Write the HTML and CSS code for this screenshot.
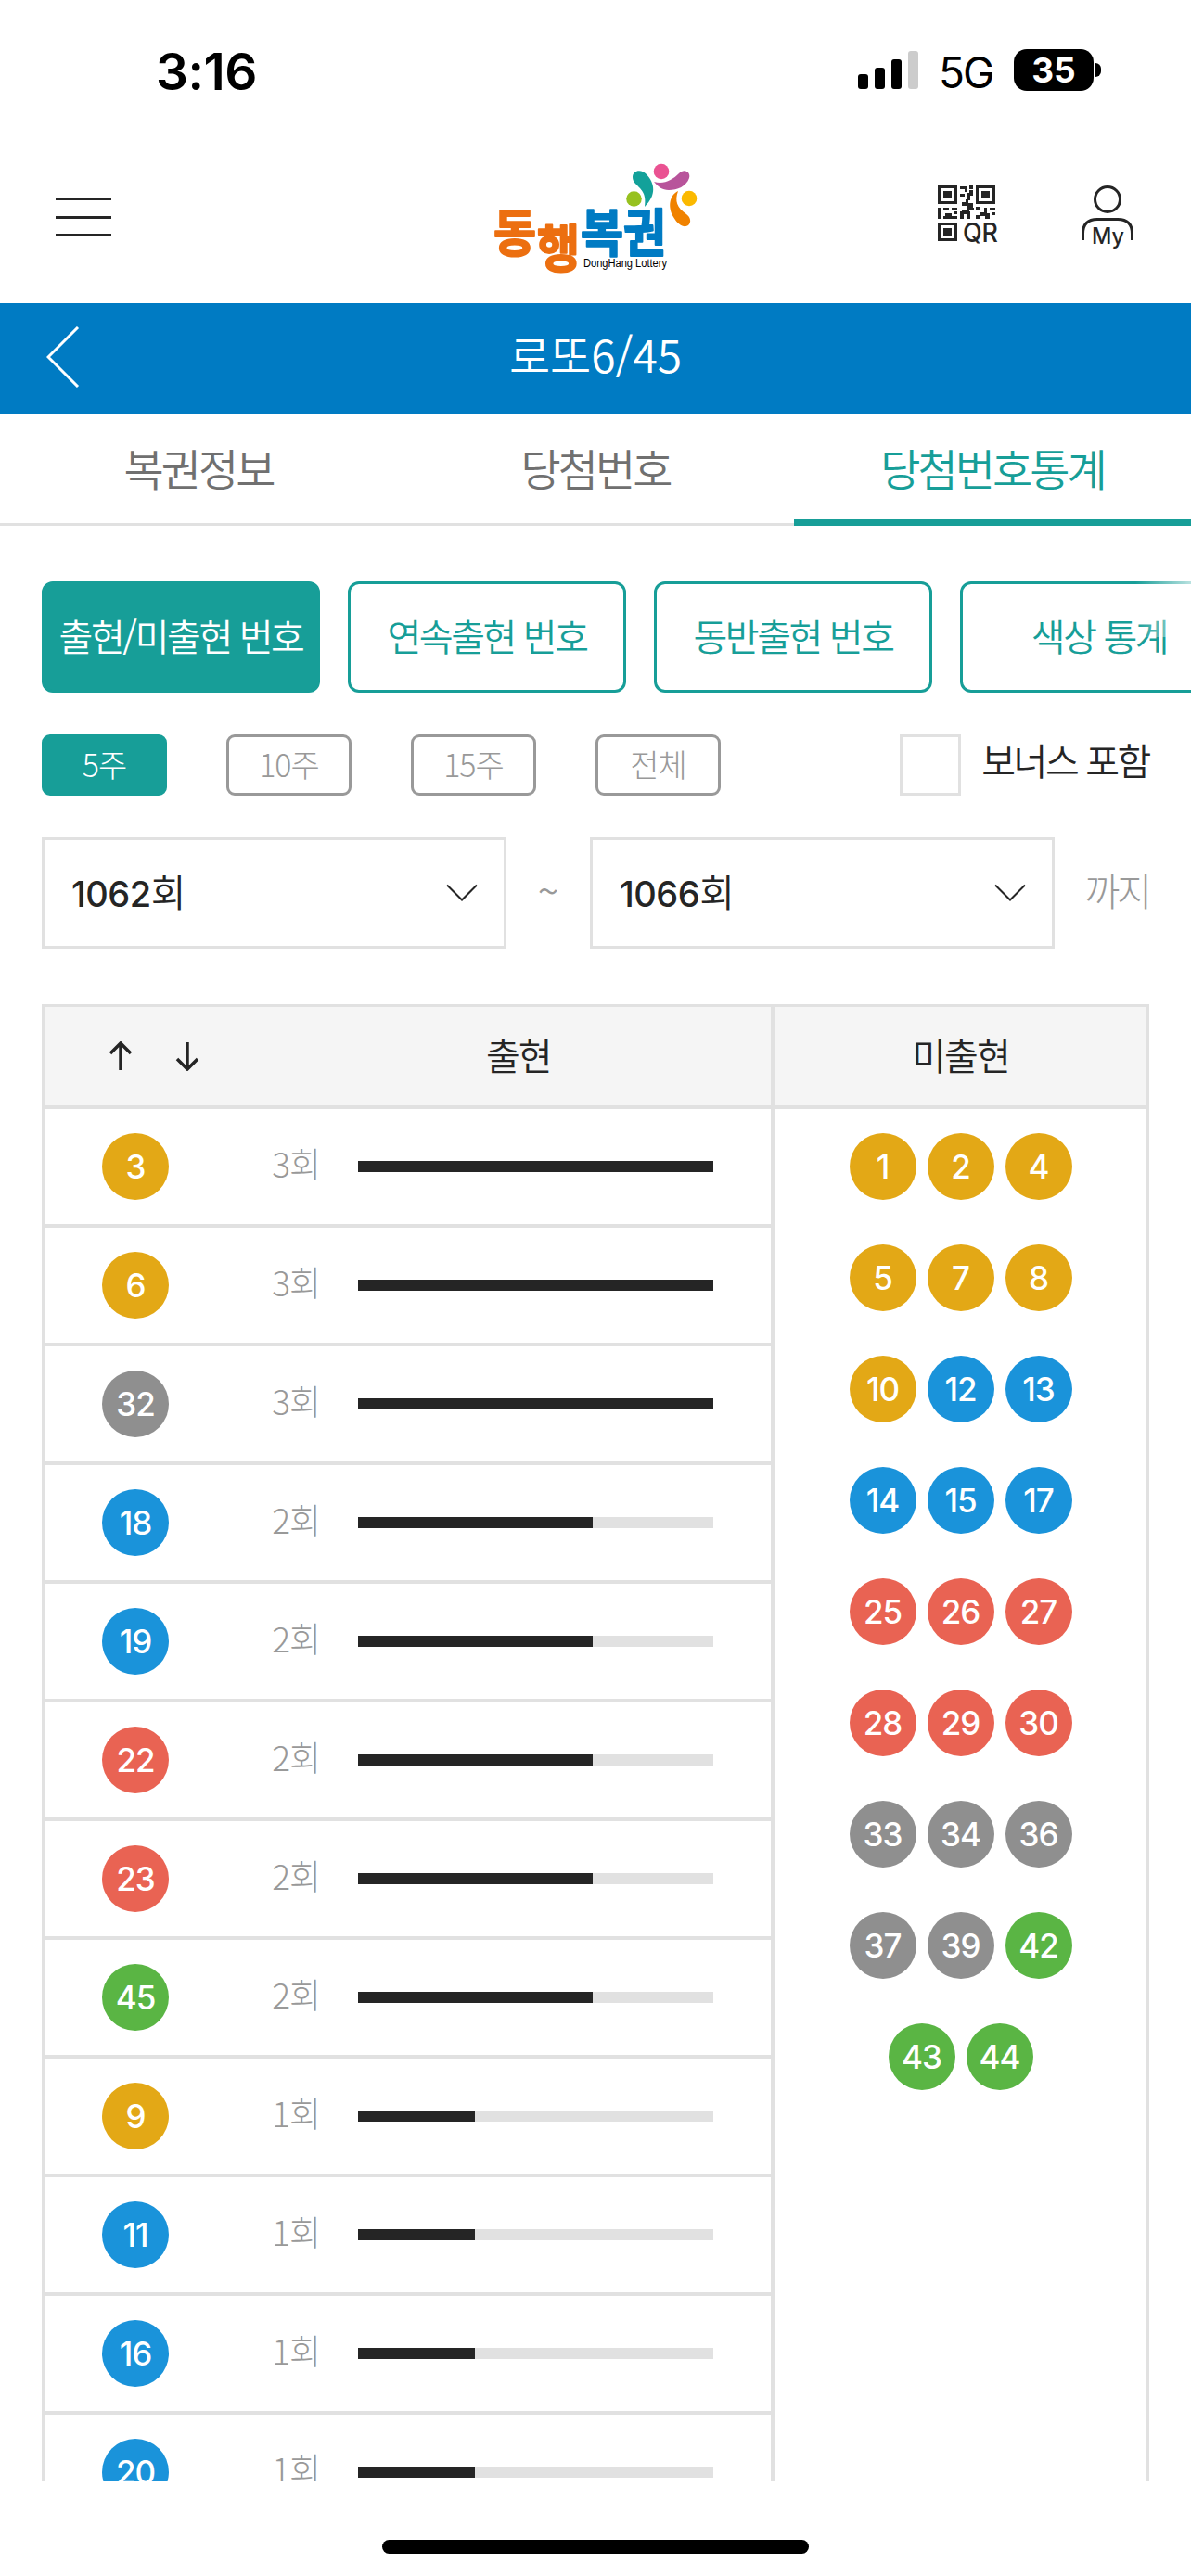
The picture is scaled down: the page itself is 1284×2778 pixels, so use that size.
FILE: index.html
```
<!DOCTYPE html>
<html lang="ko">
<head>
  <meta charset="UTF-8">
  <meta name="viewport" content="width=device-width, initial-scale=1.0">
  <title>동행복권 - 당첨번호통계</title>
  <link rel="stylesheet" href="styles.css">
</head>
<body>
  <div class="status">
    <span class="time">3:16</span>
    <div class="status-right">
      <svg class="signal" width="65" height="42" viewBox="0 0 65 42">
        <rect x="0" y="25" width="11" height="16" rx="3"/>
        <rect x="18" y="18" width="11" height="23" rx="3"/>
        <rect x="36" y="9" width="11" height="32" rx="3"/>
        <rect x="54" y="0" width="11" height="41" rx="3" fill="#ccc"/>
      </svg>
      <span class="network">5G</span>
      <span class="battery">35</span>
    </div>
  </div>

  <header>
    <button class="menu" aria-label="메뉴"><i></i><i></i><i></i></button>
    <svg class="logo" width="222" height="120" viewBox="0 0 222 120">
      <g class="logo-text">
        <text x="0" y="94" textLength="46" lengthAdjust="spacingAndGlyphs" fill="#ec6f10" stroke="#ec6f10">동</text>
        <text x="47" y="111" textLength="46" lengthAdjust="spacingAndGlyphs" fill="#ec6f10" stroke="#ec6f10">행</text>
        <text x="94" y="94" textLength="46" lengthAdjust="spacingAndGlyphs" fill="#007bc3" stroke="#007bc3">복</text>
        <text x="140" y="94" textLength="46" lengthAdjust="spacingAndGlyphs" fill="#007bc3" stroke="#007bc3">권</text>
      </g>
      <text class="logo-sub" x="97" y="111" textLength="90" lengthAdjust="spacingAndGlyphs">DongHang Lottery</text>
      <circle cx="181" cy="8" r="8.300" fill="#ea5292"/>
      <circle cx="151.500" cy="37.500" r="8.300" fill="#97c11f"/>
      <circle cx="211" cy="37" r="8.300" fill="#fbb900"/>
      <path fill="#13a19a" d="M150 14C150 6 160 5 165 11C174 21 176 33 163 46C165 32 160 28 154 22C151 19 150 17 150 14Z"/>
      <path fill="#b8549b" d="M173 19C184 22 193 17 200 10C206 4 213 9 211 15C208 24 198 28 189 28C182 28 177 24 173 19Z"/>
      <path fill="#f08200" d="M199 29C189 34 188 47 194 57C199 66 206 69 210 66C214 62 212 57 208 54C198 47 195 40 199 29Z"/>
    </svg>
    <div class="header-icons">
      <svg width="68" height="70" viewBox="0 0 68 70" fill="#252525">
        <g fill="none" stroke="#252525" stroke-width="3">
          <rect x="1.500" y="1.500" width="18" height="17"/>
          <rect x="42.500" y="1.500" width="18" height="17"/>
          <rect x="1.500" y="41.500" width="18" height="17"/>
        </g>
        <path d="M6 6h9v8H6zM47 6h9v8h-9zM6 46h9v8H6z"/>
        <path d="M24 1h8v6h-3v-3h-5zM34 0h4v4h-4zM24 9h5v3h-5zM31 8h3v-3h4v6h-3v5h-4zM26 18h4v-3h3v4h5v7h-4v3h-8v-3h5v-4h-5zM0 24h3v12H0zM6 24h6v3H6zM15 24h6v3h-6zM8 30h7v3h6v3H6v-3h2zM18 28h3v3h-3zM24 28h11v8h-4v-5h-3v5h-4zM41 23h4v4h-4zM36 24h3v3h-3zM41 32h5v-3h4v-5h3v6h3v6h-5v-3h-5v3h-5zM56 24h6v3h-6zM59 29h3v3h-3z"/>
        <text class="icon-text" x="27" y="61" textLength="38" lengthAdjust="spacingAndGlyphs">QR</text>
      </svg>
      <svg width="56" height="72" viewBox="0 0 56 72" fill="#252525">
        <g fill="none" stroke="#252525" stroke-width="3">
          <circle cx="28" cy="15" r="13.500"/>
          <path d="M1.500 59V52Q1.500 36.500 17 36.500H39Q54.500 36.500 54.500 52V59"/>
        </g>
        <text class="icon-text my" x="11" y="63" textLength="35" lengthAdjust="spacingAndGlyphs">My</text>
      </svg>
    </div>
  </header>

  <div class="title-bar">
    <svg class="back" width="36" height="66" viewBox="0 0 36 66">
      <path d="M34 1L2 33L34 65" fill="none" stroke="#fff" stroke-width="3"/>
    </svg>
    <h1>로또6/45</h1>
  </div>

  <nav class="tabs">
    <a>복권정보</a>
    <a>당첨번호</a>
    <a class="active">당첨번호통계</a>
  </nav>

  <main>
    <div class="types">
      <button class="on">출현/미출현 번호</button>
      <button>연속출현 번호</button>
      <button>동반출현 번호</button>
      <button>색상 통계</button>
    </div>

    <div class="weeks">
      <button class="on">5주</button>
      <button>10주</button>
      <button>15주</button>
      <button>전체</button>
      <label><span class="box"></span>보너스 포함</label>
    </div>

    <div class="range">
      <div class="select"><span><b>1062</b>회</span>
        <svg width="34" height="20" viewBox="0 0 34 20"><path d="M1 1.500L17 17.500L33 1.500" fill="none" stroke="#252525" stroke-width="2"/></svg>
      </div>
      <span class="tilde">~</span>
      <div class="select"><span><b>1066</b>회</span>
        <svg width="34" height="20" viewBox="0 0 34 20"><path d="M1 1.500L17 17.500L33 1.500" fill="none" stroke="#252525" stroke-width="2"/></svg>
      </div>
      <span class="until">까지</span>
    </div>

    <div class="stats">
      <div class="shown">
        <div class="head">
          <svg class="sort" width="98" height="32" viewBox="0 0 98 32">
            <path d="M13 31V3M2 13L13 2L24 13M85 1V29M74 19L85 30L96 19" fill="none" stroke="#252525" stroke-width="3.500"/>
          </svg>
          <span>출현</span>
        </div>
        <div id="shown-list"></div>
      </div>
      <div class="missing">
        <div class="head">미출현</div>
        <div class="balls" id="missing-list"></div>
      </div>
    </div>
  </main>

  <div class="home"></div>

  <script>
    const shown = [[3, 3], [6, 3], [32, 3], [18, 2], [19, 2], [22, 2], [23, 2], [45, 2], [9, 1], [11, 1], [16, 1], [20, 1]];
    const missing = [1, 2, 4, 5, 7, 8, 10, 12, 13, 14, 15, 17, 25, 26, 27, 28, 29, 30, 33, 34, 36, 37, 39, 42, 43, 44];
    const widths = { 1: 33, 2: 66, 3: 100 };

    function ball(n) {
      const colors = ['yellow', 'blue', 'red', 'gray', 'green'];
      return `<span class="ball ${colors[Math.floor((n - 1) / 10)]}">${n}</span>`;
    }

    document.getElementById('shown-list').innerHTML = shown.map(([n, count]) => `
      <div class="row">
        ${ball(n)}
        <span class="count">${count}회</span>
        <div class="bar"><div style="width: ${widths[count]}%"></div></div>
      </div>`).join('');
    document.getElementById('missing-list').innerHTML = missing.map(ball).join('');
  </script>
</body>
</html>
```

FILE: styles.css
```
* {
  box-sizing: border-box;
}
body {
  margin: 0;
  height: 2778px;
  overflow: hidden;
  display: flex;
  flex-direction: column;
  background: #fff;
  color: #252525;
  font-family: 'Noto Sans CJK KR', sans-serif;
  font-weight: 350;
}
button {
  padding: 0;
  background: none;
  border: none;
  font: inherit;
}
.status {
  height: 141px;
  padding: 0 97px 0 168px;
  display: flex;
  justify-content: space-between;
  font-family: Inter, sans-serif;
  color: #000;
}
.time {
  margin-top: 44px;
  font-size: 55px;
  line-height: 66px;
  font-weight: 600;
  letter-spacing: -0.500px;
}
.status-right {
  display: flex;
  align-items: flex-start;
}
.signal {
  margin: 55px 22px 0 0;
}
.network {
  width: 81px;
  margin-top: 50px;
  font-size: 46px;
  line-height: 56px;
  font-weight: 400;
  letter-spacing: -2px;
}
.battery {
  position: relative;
  width: 86px;
  height: 45px;
  margin: 53px 8px 0 0;
  border-radius: 14px;
  background: #000;
  color: #fff;
  font-size: 37px;
  line-height: 45px;
  font-weight: 700;
  text-align: center;
}
.battery::after {
  content: '';
  position: absolute;
  left: 88px;
  top: 15px;
  width: 6px;
  height: 15px;
  border-radius: 0 6px 6px 0;
  background: #000;
}
header {
  height: 186px;
  padding: 0 62px 0 60px;
  display: flex;
  align-items: flex-start;
}
.menu {
  width: 60px;
  margin-top: 72px;
  display: flex;
  flex-direction: column;
  gap: 16.5px;
}
.menu i {
  height: 3px;
  background: #252525;
}
.logo {
  margin: 36px 0 0 412px;
  overflow: visible;
}
.logo-text {
  font-size: 55px;
  font-weight: 700;
  stroke-width: 2;
  stroke-linejoin: round;
}
.logo-sub {
  font: 400 12px 'Liberation Sans', sans-serif;
}
.header-icons {
  display: flex;
  gap: 87px;
  margin: 59px 0 0 auto;
}
.icon-text {
  font: 500 28px Inter, sans-serif;
}
.my {
  font-size: 24px;
}
.title-bar {
  height: 120px;
  flex: none;
  display: flex;
  align-items: center;
  padding: 0 50px;
  background: #007bc3;
  color: #fff;
}
.back {
  margin-top: -5px;
}
.title-bar h1 {
  flex: 1;
  margin: 0 36px 13px 0;
  text-align: center;
  font-size: 48px;
  font-weight: 350;
}
.tabs {
  height: 120px;
  flex: none;
  display: flex;
}
.tabs a {
  flex: 1;
  border-bottom: 3px solid #e1e1e1;
  color: #707070;
  font-size: 47px;
  line-height: 114px;
  letter-spacing: -3px;
  text-align: center;
}
.tabs .active {
  border-bottom: 7px solid #179e98;
  color: #179e98;
}
main {
  position: relative;
  height: 2109px;
  padding: 60px 45px 0;
  overflow: hidden;
}
main::after {
  content: '';
  position: absolute;
  top: 0;
  right: 0;
  width: 60px;
  height: 120px;
  background: linear-gradient(to left, #ffffffb3, #fff0);
}
.types {
  display: flex;
  gap: 30px;
}
.types button {
  flex: none;
  width: 300px;
  height: 120px;
  padding-bottom: 5px;
  border: 3px solid #179e98;
  border-radius: 12px;
  color: #179e98;
  font-size: 40px;
  letter-spacing: -2.400px;
  white-space: nowrap;
}
.types .on,
.weeks .on {
  background: #179e98;
  border-color: #179e98;
  color: #fff;
}
.weeks {
  margin-top: 45px;
  display: flex;
  gap: 64px;
}
.weeks button {
  width: 135px;
  height: 66px;
  padding-bottom: 4px;
  border: 3px solid #999;
  border-radius: 9px;
  color: #999;
  font-size: 34px;
  font-weight: 300;
  letter-spacing: -1px;
}
.weeks label {
  flex: 1;
  display: flex;
  justify-content: flex-end;
  font-size: 40px;
  line-height: 54px;
  letter-spacing: -2.400px;
}
.box {
  width: 66px;
  height: 66px;
  margin-right: 22px;
  border: 3px solid #e1e1e1;
}
.range {
  margin-top: 45px;
  display: flex;
  align-items: center;
  color: #999;
  font-size: 41px;
}
.select {
  flex: none;
  width: 501px;
  height: 120px;
  padding: 0 28px 0 29px;
  border: 3px solid #e1e1e1;
  display: flex;
  align-items: center;
  justify-content: space-between;
  color: #252525;
}
.select span {
  margin-bottom: 6px;
}
.select b {
  font-family: Inter, sans-serif;
  font-size: 38px;
  font-weight: 500;
  letter-spacing: -0.500px;
}
.tilde {
  width: 90px;
  margin-bottom: 8px;
  text-align: center;
}
.until {
  flex: 1;
  margin-bottom: 8px;
  text-align: right;
  font-weight: 300;
  letter-spacing: -3px;
}
.stats {
  margin-top: 60px;
  border: 3px solid #e1e1e1;
  display: flex;
}
.shown {
  width: 787px;
  border-right: 4px solid #e1e1e1;
}
.missing {
  flex: 1;
}
.head {
  height: 110px;
  padding-bottom: 5px;
  border-bottom: 4px solid #e1e1e1;
  background: #f5f5f5;
  display: flex;
  align-items: center;
  justify-content: center;
  font-size: 40px;
  letter-spacing: -2px;
}
.shown .head {
  justify-content: flex-start;
  padding-left: 69px;
}
.sort {
  margin: 5px 309px 0 0;
}
.row {
  height: 128px;
  padding: 0 62px;
  border-bottom: 4px solid #e1e1e1;
  display: flex;
  align-items: center;
}
.ball {
  width: 72px;
  height: 72px;
  border-radius: 50%;
  color: #fff;
  font: 500 35px/72px Inter, sans-serif;
  letter-spacing: -1px;
  text-align: center;
}
.yellow { background: #e3a816; }
.blue { background: #1a93da; }
.red { background: #e96353; }
.gray { background: #8f8f8f; }
.green { background: #5ab544; }
.count {
  width: 163px;
  margin: 0 41px 9px 0;
  text-align: right;
  color: #999;
  font-size: 37px;
  font-weight: 300;
  letter-spacing: -1px;
}
.bar {
  flex: 1;
  height: 12px;
  background: #e1e1e1;
}
.bar div {
  height: 12px;
  background: #252525;
}
.balls {
  padding: 26px 70px;
  display: flex;
  flex-wrap: wrap;
  justify-content: center;
  gap: 48px 12px;
}
.home {
  width: 460px;
  height: 15px;
  margin: 63px auto 0;
  border-radius: 8px;
  background: #000;
}
```
